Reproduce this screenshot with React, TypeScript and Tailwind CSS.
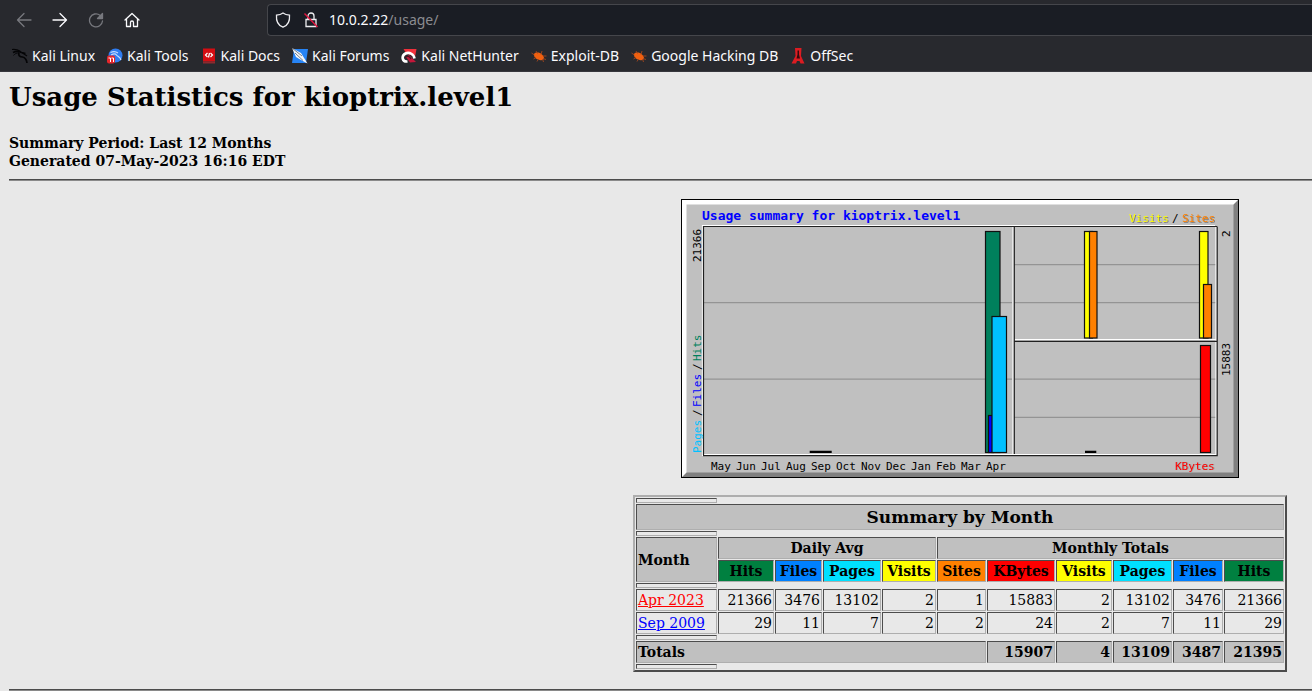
import React from "react";

type Bookmark = { label: string; icon: React.ReactNode };

const bug = (
  <svg width="16" height="16" viewBox="0 0 16 16" aria-hidden="true">
    <path d="M3 6C4.500 4 8.500 4 11 6.500C13 8.500 13.500 10 12.500 11.500C10.500 13 6.500 12 4.500 10C3.500 9 2.500 7.500 3 6Z" fill="#f06010" />
    <path d="M.5 5 3.500 7M5 3 6.500 5.500M11 3 10 6.500M2.500 11 5 9.500M6 13.500 7.500 11M12.500 14 11.500 11M12 8 15.500 8M12 10.500 15 11.500" stroke="#a4471d" strokeWidth=".9" fill="none" />
  </svg>
);

const bookmarks: Bookmark[] = [
  {
    label: "Kali Linux",
    icon: (
      <svg width="16" height="16" viewBox="0 0 16 16" fill="none" stroke="#050507" aria-hidden="true">
        <path d="M0 1.500C3 1.200 6 1.800 8.500 3.500" strokeWidth="1.100" />
        <path d="M1 4.500C4 3 7 3 9.500 4.500L13.500 5.500" strokeWidth="1.600" />
        <path d="M1.500 7.500C3 5.500 4.500 5 6.500 5" strokeWidth=".9" />
        <path d="M7 4.500C6 7.500 8 9 10.500 9C13 9.500 14.500 11 15 15" strokeWidth="1.700" />
        <path d="M10.500 5 15 8" strokeWidth="1.200" />
      </svg>
    ),
  },
  {
    label: "Kali Tools",
    icon: (
      <svg width="16" height="16" viewBox="0 0 16 16" aria-hidden="true">
        <circle cx="8.500" cy="7.500" r="7" fill="#2f7cf0" />
        <path d="M3.500 4.500C6.500 3 9 3.500 11 5M4 7C7 5.500 8.500 5.500 9.500 7C10.500 8.500 13 8.500 14 12" stroke="#c6dcff" strokeWidth="1.200" fill="none" />
        <rect y="7.500" width="8" height="8" rx="2" fill="#e5262b" />
        <path d="M1.500 10H3.500V14M4.500 10H6.500V14" stroke="#fff" fill="none" />
      </svg>
    ),
  },
  {
    label: "Kali Docs",
    icon: (
      <svg width="16" height="16" viewBox="0 0 16 16" aria-hidden="true">
        <path d="M2 .5H14V13.500H2Z" fill="#d40d12" />
        <path d="M2 13.500H14V15.500H2Z" fill="#8d2a2e" />
        <path d="M6.500 5 4.500 7 6.500 9M9.500 5 11.500 7 9.500 9M8.500 5 7.500 9.500" stroke="#fff" strokeWidth="1.200" fill="none" />
      </svg>
    ),
  },
  {
    label: "Kali Forums",
    icon: (
      <svg width="16" height="16" viewBox="0 0 16 16" aria-hidden="true">
        <path d="M2 1H16L14 15H0Z" fill="#2784f5" />
        <path d="M0 0 9 5 11.500 9 15.500 15.500 9 12 4 9Z" fill="#f5f7fa" />
        <path d="M0 0 10 8M3 5 11 12.500" stroke="#53606e" strokeWidth=".8" />
      </svg>
    ),
  },
  {
    label: "Kali NetHunter",
    icon: (
      <svg width="16" height="16" viewBox="0 0 16 16" aria-hidden="true">
        <path d="M2.500 1H15.500L14 9 5 5Z" fill="#f0313c" />
        <path d="M5 9 8 7 15 14 9 14.500Z" fill="#c3173a" />
        <path d="M13.500 10.500C13 6.500 8.500 3.500 4.500 5.500C0 8 1 14 6.500 13.500" stroke="#fff" strokeWidth="2.600" fill="none" />
        <path d="M4 10C5.500 7.500 9 8 10 11" stroke="#4a1422" strokeWidth="1.200" fill="none" />
      </svg>
    ),
  },
  { label: "Exploit-DB", icon: bug },
  { label: "Google Hacking DB", icon: bug },
  {
    label: "OffSec",
    icon: (
      <svg width="16" height="16" viewBox="0 0 16 16" aria-hidden="true">
        <path d="M5 0H11.500L11 8L14.500 15.500H10.500L9.500 13H7L6 15.500H1.500L5.500 8Z" fill="#dc1c22" />
        <path d="M7.500 2.500H9V6.500L10 10.500H6.500L7.500 6.500Z" fill="#34090c" />
      </svg>
    ),
  },
];

const navButtons = [
  { label: "Back", color: "text-[#77787e]", path: "M15 8H1.500M8 1.500 1.500 8 8 14.500" },
  { label: "Forward", color: "text-[#fbfbfe]", path: "M1 8H14.500M8 1.500 14.500 8 8 14.500" },
  { label: "Reload", color: "text-[#77787e]", path: "M12 3.200A6.500 6.500 0 1 0 14.500 9", tip: "M14.500 1.500V6.500H9.500Z" },
  { label: "Home", color: "text-[#fbfbfe]", path: "M1 8 8 1.500 15 8M2.500 7V14.500H6.500V10.500A1.500 1.500 0 0 1 9.500 10.500V14.500H13.500V7" },
];

function BrowserBar() {
  return (
    <header className="h-[72px] border-b border-[#37373d] bg-[#28292e] font-['Noto_Sans',sans-serif] text-sm text-[#fbfbfe]">
      <div className="flex h-10 items-center">
        <nav className="flex shrink-0 gap-5 pl-4" aria-label="History">
          {navButtons.map((b) => (
            <button key={b.label} type="button" aria-label={b.label} className={b.color}>
              <svg width="16" height="16" viewBox="0 0 16 16" fill="none" stroke="currentColor" strokeWidth="1.300" strokeLinecap="round" strokeLinejoin="round" aria-hidden="true">
                <path d={b.path} />
                {b.tip && <path d={b.tip} fill="currentColor" />}
              </svg>
            </button>
          ))}
        </nav>
        <div className="ml-[127px] flex h-8 grow items-center rounded-l border border-r-0 border-[#45464b] bg-[#1a1d24] pl-[7px]">
          <svg width="16" height="16" viewBox="0 0 16 16" fill="none" stroke="#ededf0" strokeWidth="1.300" aria-hidden="true">
            <path d="M8 1C10 2.500 12 3 14.500 3.200C15 9 12.500 13.500 8 15.200C3.500 13.500 1 9 1.500 3.200C4 3 6 2.500 8 1Z" />
          </svg>
          <svg className="ml-3" width="16" height="16" viewBox="0 0 16 16" fill="none" stroke="#ededf0" strokeWidth="1.300" aria-hidden="true">
            <path d="M5 7V4A3 3 0 0 1 11 4V7M3 7.500H13V14.500H3Z" />
            <path d="M1.500 1.500 14.500 15" stroke="#e2143e" strokeWidth="1.400" />
          </svg>
          <a href="#" className="ml-2.5 text-[#8b8c91]" aria-label="Address">
            <span className="text-[#fbfbfe]">10.0.2.22</span>/usage/
          </a>
        </div>
      </div>
      <nav className="flex h-8 items-center gap-3 pl-3" aria-label="Bookmarks">
        {bookmarks.map((b) => (
          <a key={b.label} href="#" className="flex items-center gap-1 whitespace-nowrap">
            {b.icon}
            {b.label}
          </a>
        ))}
      </nav>
    </header>
  );
}

type Bar = { x: number; y: number; w: number; h: number; fill: string };

const bars: Bar[] = [
  { x: 304.5, y: 32.5, w: 14.5, h: 221, fill: "#00805c" },
  { x: 307.5, y: 216.5, w: 5, h: 37, fill: "#0000ff" },
  { x: 311, y: 117.5, w: 14.5, h: 136, fill: "#00c0ff" },
  { x: 403.5, y: 32.5, w: 8, h: 106.5, fill: "#ffff00" },
  { x: 408.5, y: 32.5, w: 7.5, h: 106.5, fill: "#ff8000" },
  { x: 518.5, y: 32.5, w: 8.5, h: 106.5, fill: "#ffff00" },
  { x: 522.5, y: 85.5, w: 8, h: 53.5, fill: "#ff8000" },
  { x: 519.5, y: 146.5, w: 10, h: 107, fill: "#ff0000" },
];

const months = ["May", "Jun", "Jul", "Aug", "Sep", "Oct", "Nov", "Dec", "Jan", "Feb", "Mar", "Apr"];

function UsageChart() {
  return (
    <svg width="558" height="279" viewBox="0 0 558 279" role="img" aria-label="Usage summary for kioptrix.level1" className="font-['DejaVu_Sans_Mono',monospace] text-[11px]">
      <rect width="558" height="279" fill="#000" />
      <rect x="1" y="1" width="556" height="277" fill="#808080" />
      <path d="M1 1H557L552 6V6H6V273L1 278Z" fill="#fff" />
      <rect x="5.500" y="5.500" width="547" height="268" fill="#c0c0c0" />
      <g stroke="#949494" strokeWidth="1.300">
        <path d="M23 103.700H331M23 180.200H331M333 65.700H535M333 103.700H535M333 180.200H535M333 218.300H535" />
      </g>
      <path d="M21.500 257V26.500H534M332 27V255M21 255.500H535V27M333 140.700H535" stroke="#fff" strokeWidth="1.200" fill="none" />
      <path d="M22.500 256V27.500H536M333.300 28V255M22 256.700H536.200V27.500M333 142.300H536" stroke="#202020" strokeWidth="1.200" fill="none" />
      {bars.map((b, i) => (
        <rect key={i} x={b.x} y={b.y} width={b.w} height={b.h} fill={b.fill} stroke="#101010" strokeWidth="1.200" />
      ))}
      <path d="M128.700 252.800H150.700M404 252.800H415.300" stroke="#000" strokeWidth="2.200" />
      <text x="21" y="21" className="text-[13px] font-bold" fill="#0000ff">Usage summary for kioptrix.level1</text>
      <g className="drop-shadow-[1px_1px_0_#808080]">
        <text x="448" y="23" fill="#ffff00">Visits</text>
        <text x="501" y="23" fill="#ff8000">Sites</text>
      </g>
      <text x="491" y="23">/</text>
      {months.map((m, i) => (
        <text key={m} x={30 + i * 25} y="271">{m}</text>
      ))}
      <text x="494" y="271" fill="#ff0000" className="drop-shadow-[1px_0_0_#80808080]">KBytes</text>
      <g transform="translate(20 254) rotate(-90)">
        <text x="0" fill="#00c0ff">Pages</text>
        <text x="37">/</text>
        <text x="46" fill="#0000ff">Files</text>
        <text x="83">/</text>
        <text x="92" fill="#00805c">Hits</text>
        <text x="191">21366</text>
      </g>
      <g transform="translate(549 177) rotate(-90)">
        <text x="0">15883</text>
        <text x="139">2</text>
      </g>
    </svg>
  );
}

const columnWidths = [
  "w-[81px]", "w-[56px]", "w-[47px]", "w-[58px]", "w-[54px]", "w-[49px]",
  "w-[68px]", "w-[56px]", "w-[59px]", "w-[50px]", "w-[60px]",
];

const headings = [
  { label: "Hits", bg: "bg-[#008040]" },
  { label: "Files", bg: "bg-[#0080ff]" },
  { label: "Pages", bg: "bg-[#00e0ff]" },
  { label: "Visits", bg: "bg-[#ffff00]" },
  { label: "Sites", bg: "bg-[#ff8000]" },
  { label: "KBytes", bg: "bg-[#ff0000]" },
  { label: "Visits", bg: "bg-[#ffff00]" },
  { label: "Pages", bg: "bg-[#00e0ff]" },
  { label: "Files", bg: "bg-[#0080ff]" },
  { label: "Hits", bg: "bg-[#008040]" },
];

const rows = [
  { month: "Apr 2023", color: "text-[#ff0000]", values: [21366, 3476, 13102, 2, 1, 15883, 2, 13102, 3476, 21366] },
  { month: "Sep 2009", color: "text-[#0000ff]", values: [29, 11, 7, 2, 2, 24, 2, 7, 11, 29] },
];

const totals = [15907, 4, 13109, 3487, 21395];

const cell = "border border-t-[#4c4c4c] border-l-[#4c4c4c] border-r-[#aeaeae] border-b-[#aeaeae] px-px py-0";

function Separator() {
  return (
    <tr className="h-[5px]">
      <td className={cell} />
    </tr>
  );
}

function SummaryTable() {
  return (
    <table className="w-[654px] table-fixed border-separate border-spacing-px border-2 border-t-[#aeaeae] border-r-[#4c4c4c] border-b-[#4c4c4c] border-l-[#aeaeae] text-sm leading-5">
      <colgroup>
        {columnWidths.map((w, i) => (
          <col key={i} className={w} />
        ))}
      </colgroup>
      <tbody>
        <Separator />
        <tr className="h-[26px]">
          <th colSpan={11} className={`${cell} bg-[#c0c0c0] text-[17px] leading-6`}>Summary by Month</th>
        </tr>
        <Separator />
        <tr className="h-[22px]">
          <th rowSpan={2} scope="col" className={`${cell} bg-[#c0c0c0] text-left`}>Month</th>
          <th colSpan={4} scope="colgroup" className={`${cell} bg-[#c0c0c0]`}>Daily Avg</th>
          <th colSpan={6} scope="colgroup" className={`${cell} bg-[#c0c0c0]`}>Monthly Totals</th>
        </tr>
        <tr className="h-[22px]">
          {headings.map((h, i) => (
            <th key={i} scope="col" className={`${cell} ${h.bg}`}>{h.label}</th>
          ))}
        </tr>
        <Separator />
        {rows.map((r) => (
          <tr key={r.month} className="h-[22px]">
            <td className={cell}>
              <a href="#" className={`underline ${r.color}`}>{r.month}</a>
            </td>
            {r.values.map((v, i) => (
              <td key={i} className={`${cell} text-right`}>{v}</td>
            ))}
          </tr>
        ))}
        <Separator />
        <tr className="h-[22px]">
          <th colSpan={6} scope="row" className={`${cell} bg-[#c0c0c0] text-left`}>Totals</th>
          {totals.map((t, i) => (
            <td key={i} className={`${cell} bg-[#c0c0c0] text-right font-bold`}>{t}</td>
          ))}
        </tr>
        <Separator />
      </tbody>
    </table>
  );
}

const rule = "h-0.5 border-t border-b border-t-[#4c4c4c] border-b-[#8a8a8a]";

export default function App() {
  return (
    <div className="min-h-screen overflow-hidden bg-[#e8e8e8] text-black">
      <BrowserBar />
      <main className="pl-[9px] font-['DejaVu_Serif',serif]">
        <h1 className="pt-[9px] text-[26px] leading-8 font-bold">Usage Statistics for kioptrix.level1</h1>
        <p className="mt-[21px] text-sm leading-[18px] font-bold">
          Summary Period: Last 12 Months
          <br />
          Generated 07-May-2023 16:16 EDT
        </p>
        <hr className={`mt-[9px] ${rule}`} />
        <section className="flex flex-col items-center gap-[17px] pt-[18px] pl-[599px]">
          <UsageChart />
          <SummaryTable />
        </section>
        <hr className={`mt-[17px] ${rule}`} />
      </main>
    </div>
  );
}
